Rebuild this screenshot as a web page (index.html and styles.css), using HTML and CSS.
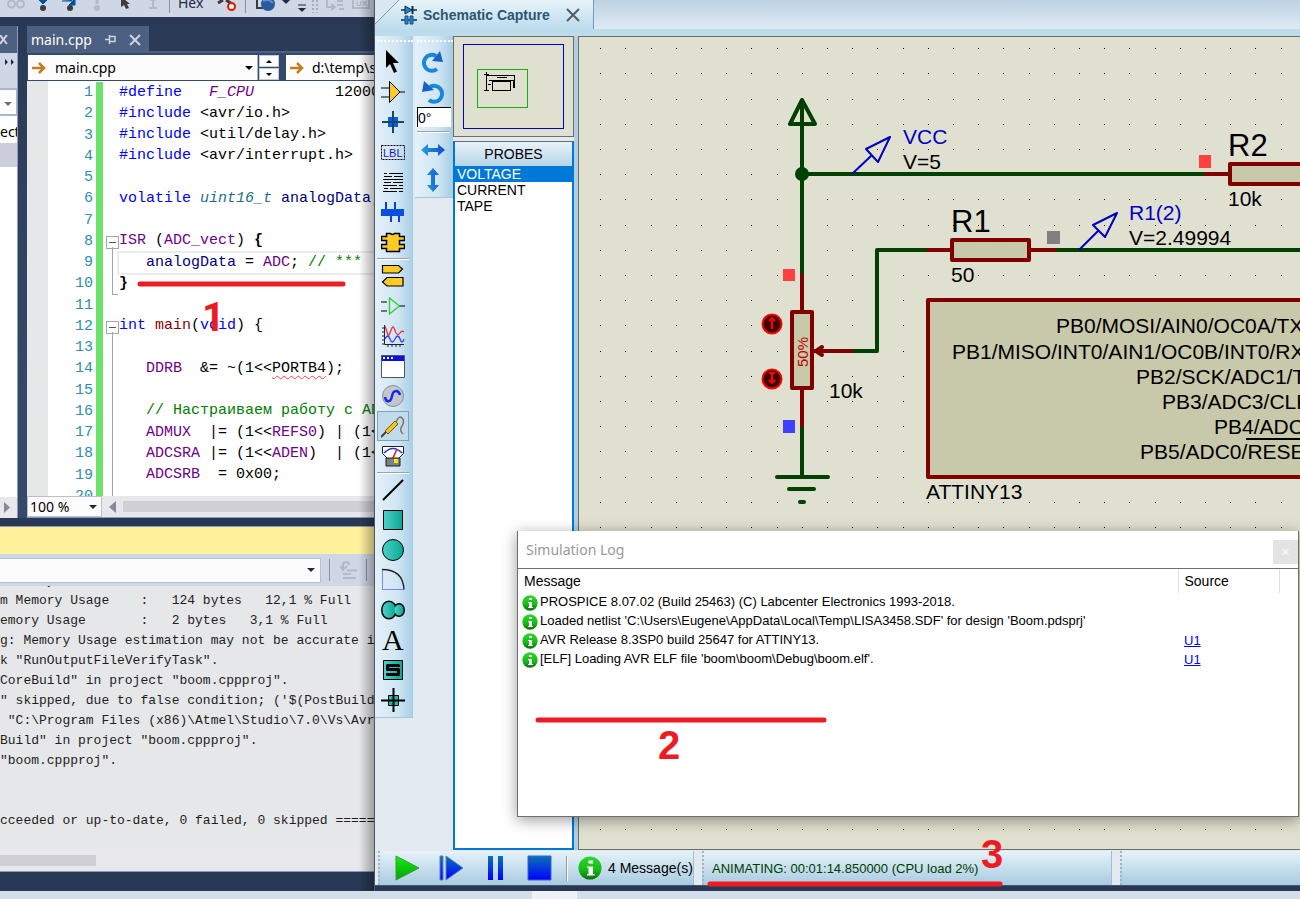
FILE: index.html
```html
<!DOCTYPE html>
<html lang="en">
<head>
<meta charset="utf-8">
<title>Schematic Capture</title>
<link rel="stylesheet" href="styles.css">
</head>
<body>
<div class="desktop">
<div class="windows">

<section class="ide" aria-label="Code editor">
  <div class="ide-toolbar">
    <svg class="ide-tools" width="375" height="17" viewBox="0 0 375 17" fill="none" aria-hidden="true">
      <g stroke="#b4b9c6" stroke-width="2"><circle cx="11.500" cy="4" r="3.500"/><circle cx="20.500" cy="4" r="3.500"/><path d="M10 0l2-2M20 0h3"/></g>
      <path d="M39 0h8l-4 4zM62 1h10V0M75 0v5h-6l5-5z" fill="#00539c" stroke="#00539c"/>
      <circle cx="43" cy="8" r="3" fill="#3b3b3b"/><circle cx="70" cy="8" r="3" fill="#3b3b3b"/>
      <path d="M97 0v4" stroke="#b4b9c6" stroke-width="3"/><circle cx="97" cy="8" r="3" fill="#b4b9c6"/>
      <path d="M121 0v7l3-2 2 4 3-1-2-4h3l-6-5z" fill="#3b3b3b"/>
      <path d="M153 0v7M149 8h8M150 0h6" stroke="#b4b9c6" stroke-width="2"/>
      <path d="M169.500 0v13M245.500 0v13" stroke="#8591a8"/>
      <path d="M218 3l5-3M226 0l6 4" stroke="#3b3b3b" stroke-width="3"/><circle cx="231.500" cy="6.500" r="3.500" fill="#fff" stroke="#e51400" stroke-width="2"/>
      <path d="M257 0v8h6" stroke="#3b3b3b" stroke-width="2"/><circle cx="268" cy="4" r="7" fill="#285a9e"/><path d="M263 1l5-2 5 4" stroke="#5f91cd" stroke-width="2"/>
      <path d="M282 0h8l-4 4z" fill="#1e2a45"/>
      <path d="M298 5h8" stroke="#1e2a45"/><path d="M298 8h8l-4 4z" fill="#1e2a45"/>
      <path d="M313 0v13M317 0v13" stroke="#7e8799" stroke-dasharray="2 2"/>
      <path d="M327 0v7h7M331 4l4 3-4 3M337 1h6M337 5h6M339 9h5" stroke="#b4b9c6" stroke-width="2"/>
      <path d="M353 0v8h16V0" stroke="#b4b9c6" stroke-width="2"/>
      <text x="356" y="6" class="tiny">UX</text>
    </svg>
    <span class="hex">Hex</span>
  </div>

  <div class="ide-main">
    <aside class="side">
      <div class="side-title"><svg width="9" height="10" viewBox="0 0 9 10" aria-hidden="true"><path d="M0 0l7 9M7 0L0 9" stroke="#ccd3e2" stroke-width="2"/></svg></div>
      <div class="side-tools"><svg width="10" height="6" viewBox="0 0 10 6" aria-hidden="true"><path d="M0 0l3 3-3 3zM6 0l3 3-3 3z" fill="#1e2a45"/></svg></div>
      <div class="side-combo"><svg width="8" height="4" viewBox="0 0 8 4" aria-hidden="true"><path d="M0 0h8L4 4z" fill="#717171"/></svg></div>
      <div class="side-text">ect</div>
      <div class="side-row"></div>
      <div class="side-body"></div>
      <div class="side-scroll"><svg width="6" height="11" viewBox="0 0 6 11" aria-hidden="true"><path d="M0 0l6 5.500L0 11z" fill="#868999"/></svg></div>
    </aside>

    <div class="editor">
      <div class="tabs">
        <div class="tab">
          <span>main.cpp</span>
          <button class="bare" aria-label="Pin"><svg width="12" height="10" viewBox="0 0 12 10" fill="none" stroke="#ccd3e2"><path d="M0 4.500h4M4.500 0v9M5 1.500h5v5H5M5 6.500h5" stroke-width="1.500"/></svg></button>
          <button class="bare" aria-label="Close"><svg width="12" height="12" viewBox="0 0 12 12"><path d="M1 1l10 10M11 1L1 11" stroke="#ccd3e2" stroke-width="2"/></svg></button>
        </div>
      </div>
      <div class="navbar">
        <div class="combo combo-file">
          <svg width="14" height="12" viewBox="0 0 14 12" fill="none" stroke="#c27d1a" stroke-width="2.500"><path d="M0 6h12M7 1l5 5-5 5"/></svg>
          <select aria-label="File"><option>main.cpp</option></select>
          <svg width="8" height="4" viewBox="0 0 8 4"><path d="M0 0h8L4 4z"/></svg>
        </div>
        <div class="spinner">
          <button aria-label="Up"><svg width="6" height="3" viewBox="0 0 6 3"><path d="M0 3h6L3 0z"/></svg></button>
          <button aria-label="Down"><svg width="6" height="3" viewBox="0 0 6 3"><path d="M0 0h6L3 3z"/></svg></button>
        </div>
        <div class="combo combo-path">
          <svg width="14" height="12" viewBox="0 0 14 12" fill="none" stroke="#c27d1a" stroke-width="2.500"><path d="M0 6h12M7 1l5 5-5 5"/></svg>
          <select aria-label="Path"><option>d:\temp\src\main.cpp</option></select>
        </div>
      </div>
      <div class="code-view">
        <div class="code">
          <div class="line"><span class="no">1</span><i class="fold"></i><code><b class="k">#define</b>   <em class="m">F_CPU</em>         12000000UL</code></div>
          <div class="line"><span class="no">2</span><i class="fold"></i><code><b class="k">#include</b> &lt;avr/io.h&gt;</code></div>
          <div class="line"><span class="no">3</span><i class="fold"></i><code><b class="k">#include</b> &lt;util/delay.h&gt;</code></div>
          <div class="line"><span class="no">4</span><i class="fold"></i><code><b class="k">#include</b> &lt;avr/interrupt.h&gt;</code></div>
          <div class="line"><span class="no">5</span><i class="fold"></i><code></code></div>
          <div class="line"><span class="no">6</span><i class="fold"></i><code><b class="k">volatile</b> <em class="t">uint16_t</em> <b class="v">analogData</b>;</code></div>
          <div class="line"><span class="no">7</span><i class="fold"></i><code></code></div>
          <div class="line"><span class="no">8</span><i class="fold open"></i><code><b class="m">ISR</b> (<b class="m">ADC_vect</b>) <strong>{</strong></code></div>
          <div class="line current"><span class="no">9</span><i class="fold bar"></i><code>   <b class="v">analogData</b> = <b class="m">ADC</b>; <b class="c">// ***</b></code></div>
          <div class="line"><span class="no">10</span><i class="fold end"></i><code><strong>}</strong></code></div>
          <div class="line"><span class="no">11</span><i class="fold"></i><code></code></div>
          <div class="line"><span class="no">12</span><i class="fold open"></i><code><b class="k">int</b> <b class="f">main</b>(<b class="k">void</b>) {</code></div>
          <div class="line"><span class="no">13</span><i class="fold bar"></i><code></code></div>
          <div class="line"><span class="no">14</span><i class="fold bar"></i><code>   <b class="m">DDRB</b>  &amp;= ~(1&lt;&lt;<b class="err">PORTB4</b>);</code></div>
          <div class="line"><span class="no">15</span><i class="fold bar"></i><code></code></div>
          <div class="line"><span class="no">16</span><i class="fold bar"></i><code>   <b class="c">// Настраиваем работу с ADC</b></code></div>
          <div class="line"><span class="no">17</span><i class="fold bar"></i><code>   <b class="m">ADMUX</b>  |= (1&lt;&lt;<b class="m">REFS0</b>) | (1&lt;&lt;</code></div>
          <div class="line"><span class="no">18</span><i class="fold bar"></i><code>   <b class="m">ADCSRA</b> |= (1&lt;&lt;<b class="m">ADEN</b>)  | (1&lt;&lt;</code></div>
          <div class="line"><span class="no">19</span><i class="fold bar"></i><code>   <b class="m">ADCSRB</b>  = 0x00;</code></div>
          <div class="line"><span class="no">20</span><i class="fold bar"></i><code></code></div>
        </div>
      </div>
      <div class="zoombar">
        <div class="combo combo-zoom">
          <select aria-label="Zoom"><option>100 %</option></select>
          <svg width="8" height="4" viewBox="0 0 8 4"><path d="M0 0h8L4 4z" fill="#1e2a45"/></svg>
        </div>
        <svg width="7" height="12" viewBox="0 0 7 12"><path d="M7 0v12L0 6z" fill="#868999"/></svg>
        <div class="thumb"></div>
      </div>
    </div>
  </div>

  <div class="output">
    <div class="output-title"></div>
    <div class="output-tools">
      <div class="combo combo-out">
        <select aria-label="Show output from"><option></option></select>
        <svg width="8" height="4" viewBox="0 0 8 4"><path d="M0 0h8L4 4z" fill="#1e2a45"/></svg>
      </div>
      <button class="bare clear" aria-label="Clear"><svg width="18" height="18" viewBox="0 0 18 18" fill="none" stroke="#b4b9c6" stroke-width="2"><path d="M3 9V4q0-3 3-3t3 3M0 5l3 4 4-4M7 9.500h10M3 13h8M3 17h13"/></svg></button>
    </div>
    <pre class="log">      y
m Memory Usage    :   124 bytes   12,1 % Full
emory Usage       :   2 bytes   3,1 % Full
g: Memory Usage estimation may not be accurate if
k "RunOutputFileVerifyTask".
CoreBuild" in project "boom.cppproj".
" skipped, due to false condition; ('$(PostBuildEv
 "C:\Program Files (x86)\Atmel\Studio\7.0\Vs\Avr.c
Build" in project "boom.cppproj".
"boom.cppproj".


cceeded or up-to-date, 0 failed, 0 skipped =======</pre>
    <div class="output-scroll"><div class="thumb"></div></div>
  </div>
  <div class="ide-shade"></div>
</section>

<main class="proteus">
  <header class="title">
    <div class="doc-tab">
      <svg class="corner" width="24" height="30" viewBox="0 0 24 30" aria-hidden="true"><path d="M0 0h24L0 24z" fill="#dce8f1"/><path d="M24 0L0 24" stroke="#6d9cbc"/></svg>
      <svg width="16" height="20" viewBox="0 0 16 20" fill="none" stroke="#12303f" aria-hidden="true"><path d="M0 5h16M0 15h16" stroke-width="1.500"/><path d="M4 1l7 4-7 4z" fill="#1c86d8"/><path d="M11.500 1v8" stroke-width="2"/><path d="M4 11h3v8H4zM9 11h3v8H9z" fill="#1c86d8" stroke="#1e4f80"/></svg>
      <h1>Schematic Capture</h1>
      <button class="bare" aria-label="Close tab"><svg width="14" height="14" viewBox="0 0 14 14"><path d="M1 1l12 12M13 1L1 13" stroke="#555c62" stroke-width="2"/></svg></button>
    </div>
  </header>

  <div class="work">
    <nav class="strip modes" aria-label="Modes">
      <button aria-label="Selection"><svg viewBox="0 0 24 24"><path d="M5 0v18l4-4 4 9 3-1.500-4-8.500h6z"/></svg></button>
      <button aria-label="Component"><svg viewBox="0 0 24 24"><path d="M0 8h9M0 17h9M19 12h5" stroke="#000"/><path d="M8.500 1.500l10.500 10.500L8.500 22.500z" fill="#ffc926" stroke="#000"/></svg></button>
      <button aria-label="Junction"><svg viewBox="0 0 24 24"><path d="M7 7h10v10H7z" fill="#0a5fd8"/><path d="M1 12h22M12 1v22" stroke="#16466e" stroke-width="2"/></svg></button>
      <button aria-label="Label"><svg viewBox="0 0 24 24"><path d="M.5 5.500h23v14H.5z" fill="none" stroke="#000" stroke-dasharray="2 1"/><text x="2" y="17" class="lbl">LBL</text></svg></button>
      <button aria-label="Text script"><svg viewBox="0 0 24 24"><path d="M3 3.500h3m2 0h14M3 6.500h8m2 0h9M2 9.500h20M3 12.500h7m2 0h10M2 15.500h14m2 0h4M3 18.500h4m2 0h13M2 21.500h14m2 0h4" stroke="#000"/></svg></button>
      <button aria-label="Bus"><svg viewBox="0 0 24 24"><path d="M0 9h23v7H0z" fill="#0a4fe0"/><path d="M5 2v7M14 2v7M10 16v6M18 16v6" stroke="#0a3fe8" stroke-width="2"/></svg></button>
      <button aria-label="Subcircuit"><svg viewBox="0 0 24 24"><path d="M5.500 3.500h4q2 2 4 0h5v3h5v4h-5v4h5v4h-5v3h-13v-3h-5v-4h5v-4h-5v-4h5z" fill="#ffc926" stroke="#000" stroke-width="1.500"/></svg></button>
      <hr>
      <button aria-label="Terminal"><svg viewBox="0 0 24 24" fill="#ffc926" stroke="#000" stroke-width="1.200"><path d="M1.500 1.500h16l4 3.500-4 4h-16zM22 13.500H6L1.500 18 6 22h16z"/></svg></button>
      <button aria-label="Pin"><svg viewBox="0 0 24 24" fill="none"><path d="M0 8h6M0 17h6M18 12h6" stroke="#000"/><path d="M8.500 4l10 8-10 8z" stroke="#2cd02c" stroke-width="1.300"/></svg></button>
      <button aria-label="Graph"><svg viewBox="0 0 24 24" fill="none"><path d="M3.500 1v19.500H23M1 4h2M1 8h2M1 12h2M1 16h2M1 20h2M7 20v3M11 20v3M15 20v3M19 20v3" stroke="#222"/><path d="M4 2l3 9h1l3-7q1-2 2 0l2 5q2 3 4 0t4-1" stroke="#f03040" stroke-width="1.300"/><path d="M4 15q3-6 5 0t5 0 5 0 4 0" stroke="#3a3aff" stroke-width="1.300"/></svg></button>
      <button aria-label="Active popup"><svg viewBox="0 0 24 24"><path d="M.5 1.500h23v22H.5z" fill="#fff" stroke="#555"/><path d="M1 2h22v5H1z" fill="#0a10e0"/><path d="M2 3h2v2H2zM6 3h2v2H6zM10 3h2v2h-2z" fill="#fff"/></svg></button>
      <button aria-label="Generator"><svg viewBox="0 0 24 24" fill="none"><circle cx="12" cy="12" r="10.500" fill="#c3c6cb" stroke="#8b8f94"/><path d="M4 13q1 5 4 4 2 0 3-5t4-5q3 0 4 4" stroke="#1428f0" stroke-width="2.500"/></svg></button>
      <button class="active" aria-label="Probe"><svg viewBox="0 0 24 24" fill="none"><path d="M0 23l5-5" stroke="#444" stroke-width="2"/><path d="M4 17L14 7l3 3L7 20z" fill="#f5c422" stroke="#6d5a10"/><path d="M15 8q3-7 6-4 3 3 0 8-3 4 1 8" stroke="#777" stroke-width="1.500"/></svg></button>
      <button aria-label="Instrument"><svg viewBox="0 0 24 24" fill="none"><path d="M1.500 2.500h21v7l-5 5h-11l-5-5z" fill="#fff" stroke="#222"/><path d="M3 9q9-9 18 0" stroke="#2438d8" stroke-width="1.500"/><path d="M12 14l4-9" stroke="#e01020" stroke-width="1.500"/><path d="M5 14h14v8H5z" fill="#7b7f86" stroke="#222"/><path d="M13 15h4v4h-4z" fill="#ffe600"/></svg></button>
      <hr>
      <button aria-label="Line"><svg viewBox="0 0 24 24"><path d="M2 22L22 2" stroke="#000" stroke-width="2"/></svg></button>
      <button aria-label="Box"><svg viewBox="0 0 24 24"><path d="M2.500 2.500h19v19h-19z" fill="url(#teal)" stroke="#000"/></svg></button>
      <button aria-label="Circle"><svg viewBox="0 0 24 24"><circle cx="12" cy="12" r="10.500" fill="url(#teal)" stroke="#000"/></svg></button>
      <button aria-label="Arc"><svg viewBox="0 0 24 24" fill="none"><path d="M1.500 1.500v20H23" stroke="#2020ff" stroke-dasharray="1 1"/><path d="M1 1.500q21 0 22 20" stroke="#222" stroke-width="1.300"/></svg></button>
      <button aria-label="Path"><svg viewBox="0 0 24 24"><g fill="#20b8a8" stroke="#000" stroke-width="2"><ellipse cx="8" cy="12" rx="7" ry="8.500"/><ellipse cx="18" cy="12" rx="5" ry="6"/></g><g fill="url(#teal)"><ellipse cx="8" cy="12" rx="6.500" ry="8"/><ellipse cx="18" cy="12" rx="4.500" ry="5.500"/></g></svg></button>
      <button aria-label="Text"><svg viewBox="0 0 24 24"><text x="1" y="22" class="letter">A</text></svg></button>
      <button aria-label="Symbol"><svg viewBox="0 0 24 24"><path d="M2.500 2.500h19v19h-19z" fill="url(#teal)" stroke="#000"/><path d="M17.500 9V7.500h-11v4h11v5h-11V15" fill="none" stroke="#000" stroke-width="3" stroke-linejoin="round"/></svg></button>
      <button aria-label="Marker"><svg viewBox="0 0 24 24"><path d="M7.500 7.500h10v10h-10z" fill="#20b8a8" stroke="#000"/><path d="M0 12.500h24M12.500 0v24" stroke="#000" stroke-width="2"/></svg></button>
    </nav>

    <nav class="strip rotate" aria-label="Rotation">
      <button aria-label="Rotate clockwise"><svg viewBox="0 0 24 24"><path d="M16 19A8 8 0 1 1 15 6" fill="none" stroke="#1b87d8" stroke-width="4"/><path d="M19 1l3 11-11-1z" fill="#1763c8"/></svg></button>
      <button aria-label="Rotate anticlockwise"><svg viewBox="0 0 24 24"><path d="M8 20A8 8 0 1 0 9 7" fill="none" stroke="#1b87d8" stroke-width="4"/><path d="M3 1L1 12l12-2z" fill="#1763c8"/></svg></button>
      <input type="text" value="0°" aria-label="Angle">
      <hr>
      <button aria-label="Mirror horizontally"><svg viewBox="0 0 24 24"><path d="M0 12l7-6v4h10V6l7 6-7 6v-4H7v4z" fill="url(#blue)"/></svg></button>
      <button aria-label="Mirror vertically"><svg viewBox="0 0 24 24"><path d="M12 0l6 7h-4v10h4l-6 7-6-7h4V7H6z" fill="url(#blue)"/></svg></button>
    </nav>

    <aside class="panels">
      <div class="overview">
        <svg width="117" height="98" viewBox="0 0 117 98" fill="none" shape-rendering="crispEdges" aria-hidden="true"><path d="M9.500 7.500h100v84h-100z" stroke="#0000d0"/><path d="M23.500 32.500h50v38h-50z" stroke="#0fb40f"/><path d="M32 35v18M30 37h5M30 53h5M33 38h27v13M35 43h24v8M34 47h3M38.500 44.500h18v9h-18zM43 40h10" stroke="#000"/></svg>
      </div>
      <div class="picker">
        <h2>PROBES</h2>
        <ul role="listbox" aria-label="Probes">
          <li role="option" class="chosen" aria-selected="true">VOLTAGE</li>
          <li role="option">CURRENT</li>
          <li role="option">TAPE</li>
        </ul>
      </div>
    </aside>

    <div class="canvas">
      <svg class="sheet" aria-label="Schematic">
        <defs>
          <linearGradient id="teal"><stop offset="0" stop-color="#4fd0cc"/><stop offset="1" stop-color="#08a890"/></linearGradient>
          <linearGradient id="blue" gradientUnits="userSpaceOnUse" x1="0" y1="12" x2="24" y2="8"><stop offset="0" stop-color="#22a4e0"/><stop offset="1" stop-color="#1248d0"/></linearGradient>
          <linearGradient id="play" x2="0" y2="1"><stop offset="0" stop-color="#10f010"/><stop offset="1" stop-color="#06a006"/></linearGradient>
          <linearGradient id="deep" x2="0" y2="1"><stop offset="0" stop-color="#0a72b8"/><stop offset="1" stop-color="#0000ff"/></linearGradient>
          <linearGradient id="info" x2="0" y2="1"><stop offset="0" stop-color="#30d830"/><stop offset=".6" stop-color="#18b818"/><stop offset="1" stop-color="#087008"/></linearGradient>
          <pattern id="grid" patternUnits="userSpaceOnUse" x="121" y="99" width="126" height="126">
            <path d="M0 .5h126M0 25.500h126M0 50.500h126M0 75.500h126M0 100.500h126" stroke="#000" stroke-dasharray="1 25 1 24 1 24 1 24 1 24"/>
          </pattern>
        </defs>
        <g transform="translate(-579 -37)" fill="none" stroke-linejoin="round">
          <rect x="579" y="37" width="3000" height="2000" fill="url(#grid)"/>
          <g stroke="#004000" stroke-width="4" stroke-linecap="round">
            <path d="M802 100v175M802 427v50M802 174h402M802 100l-12 24h25zM841 351h36V250h50M1056 250h300"/>
            <path d="M777 477h51M789 489h25M800 502h4"/>
          </g>
          <circle cx="802" cy="174" r="7" fill="#004000"/>
          <g stroke="#800000" stroke-width="4">
            <path d="M802 274v38M802 389v38M814 351h39M927 250h24M1031 250h25M1204 174h24"/>
            <path d="M822 347l-6 4 6 4" stroke-linecap="round"/>
            <path d="M792 312h20v76h-20zM952 240h77v20h-77zM1230 164h77v20h-77zM928 300h500v177H928z" fill="#c8c8aa"/>
          </g>
          <g stroke="#0000c0" stroke-width="2"><path d="M852 174l19-18M890 137l-24 12 12 13z"/><path d="M1079 250l19-19M1117 213l-24 12 12 12z"/></g>
          <path d="M783 269h12v12h-12zM1199 155h12v13h-12z" fill="#ff4040"/>
          <path d="M783 420h12v13h-12z" fill="#4040ff"/>
          <path d="M1047 231h13v13h-13z" fill="#808080"/>
          <g fill="#400000" stroke="#ff0000" stroke-width="2"><circle cx="772" cy="324" r="9.500"/><circle cx="772" cy="379" r="9.500"/></g>
          <path d="M772 329v-10M769 321l3-3 3 3M772 373v10M769 380l3 3 3-3M769 373h6" stroke="#ff0000" stroke-width="2"/>
          <g class="part-text">
            <text x="903" y="144" class="blue">VCC</text><text x="903" y="169">V=5</text>
            <text x="1129" y="220" class="blue">R1(2)</text><text x="1129" y="245">V=2.49994</text>
            <text x="951" y="232" class="ref">R1</text><text x="951" y="282">50</text>
            <text x="1228" y="156" class="ref">R2</text><text x="1228" y="206">10k</text>
            <text x="829" y="398">10k</text>
            <text x="926" y="499">ATTINY13</text>
            <text x="1056" y="333">PB0/MOSI/AIN0/OC0A/TXD</text>
            <text x="952" y="359">PB1/MISO/INT0/AIN1/OC0B/INT0/RXD</text>
            <text x="1136" y="384">PB2/SCK/ADC1/T0</text>
            <text x="1162" y="409">PB3/ADC3/CLKI</text>
            <text x="1214" y="434">PB4/ADC2</text>
            <text x="1140" y="459">PB5/ADC0/RESET</text>
            <text x="787" y="358" class="wiper" transform="rotate(-90 802 352)">50%</text>
          </g>
          <path d="M1246 439h80" stroke="#000" stroke-width="2"/>
        </g>
      </svg>
    </div>
  </div>

  <footer class="status">
    <div class="controls">
      <button aria-label="Play"><svg width="26" height="26" viewBox="0 0 26 26"><path d="M2 1l23 12L2 25z" fill="url(#play)" stroke="#3a9a3a"/></svg></button>
      <button aria-label="Step"><svg width="26" height="26" viewBox="0 0 26 26"><path d="M2 1h3v24H2zM8 1l17 12L8 25z" fill="url(#deep)" stroke="#5a80b8"/></svg></button>
      <button aria-label="Pause"><svg width="26" height="26" viewBox="0 0 26 26"><path d="M6 1h5v24H6zM16 1h5v24h-5z" fill="url(#deep)"/></svg></button>
      <button aria-label="Stop"><svg width="26" height="26" viewBox="0 0 26 26"><path d="M2 1h23v24H2z" fill="url(#deep)" stroke="#3a66c8"/></svg></button>
      <i class="rule"></i>
      <svg class="info" width="24" height="24" viewBox="0 0 16 16" aria-hidden="true"><circle cx="8" cy="8" r="7.700" fill="url(#info)"/><path d="M7 3h3v2H7zM6 7h4v5h1v1H6v-1h1V8H6z" fill="#fff"/></svg>
      <span>4 Message(s)</span>
    </div>
    <div class="anim">ANIMATING: 00:01:14.850000 (CPU load 2%)</div>
    <div class="rest"></div>
  </footer>

  <section class="simlog" aria-label="Simulation Log">
    <header><h2>Simulation Log</h2><button aria-label="Close log">×</button></header>
    <table>
      <thead><tr><th>Message</th><th>Source</th><th></th></tr></thead>
      <tbody>
        <tr><td><svg viewBox="0 0 16 16"><circle cx="8" cy="8" r="7.700" fill="url(#info)"/><path d="M7 3h3v2H7zM6 7h4v5h1v1H6v-1h1V8H6z" fill="#fff"/></svg>PROSPICE 8.07.02 (Build 25463) (C) Labcenter Electronics 1993-2018.</td><td></td><td></td></tr>
        <tr><td><svg viewBox="0 0 16 16"><circle cx="8" cy="8" r="7.700" fill="url(#info)"/><path d="M7 3h3v2H7zM6 7h4v5h1v1H6v-1h1V8H6z" fill="#fff"/></svg>Loaded netlist 'C:\Users\Eugene\AppData\Local\Temp\LISA3458.SDF' for design 'Boom.pdsprj'</td><td></td><td></td></tr>
        <tr><td><svg viewBox="0 0 16 16"><circle cx="8" cy="8" r="7.700" fill="url(#info)"/><path d="M7 3h3v2H7zM6 7h4v5h1v1H6v-1h1V8H6z" fill="#fff"/></svg>AVR Release 8.3SP0 build 25647 for ATTINY13.</td><td><a href="#u1">U1</a></td><td></td></tr>
        <tr><td><svg viewBox="0 0 16 16"><circle cx="8" cy="8" r="7.700" fill="url(#info)"/><path d="M7 3h3v2H7zM6 7h4v5h1v1H6v-1h1V8H6z" fill="#fff"/></svg>[ELF] Loading AVR ELF file 'boom\boom\Debug\boom.elf'.</td><td><a href="#u1">U1</a></td><td></td></tr>
      </tbody>
    </table>
  </section>
</main>
</div>

<div class="taskbar"><i></i></div>

<svg class="marks" aria-hidden="true">
  <path d="M140 284h203M538 720h286M710 884h290" stroke="#ed1c24" stroke-width="5" stroke-linecap="round"/>
  <text x="202" y="331" class="one">1</text><text x="658" y="759">2</text><text x="981" y="868">3</text>
</svg>
</div>
</body>
</html>
```
FILE: styles.css
```css
* { box-sizing: border-box; }
body { margin: 0; font-family: "Liberation Sans", Arial, sans-serif; font-size: 14px; color: #000; }
button, select, input { font: inherit; color: inherit; margin: 0; padding: 0; border: 0; border-radius: 0; background: none; }
svg { display: block; flex: none; }
h1, h2, ul, pre { margin: 0; padding: 0; font-weight: normal; }

.desktop { position: relative; display: flex; flex-direction: column; height: 100vh; overflow: hidden; background: #293955; }
.windows { flex: 1; display: flex; min-height: 0; }
.bare { display: flex; }

/* Code editor */
.ide { position: relative; flex: 0 0 375px; display: flex; flex-direction: column; overflow: hidden; padding-bottom: 19px; background: #293955; font-family: "Noto Sans", sans-serif; }
.ide-toolbar { position: relative; height: 17px; flex: none; overflow: hidden; background: #cfd6e5; }
.hex { position: absolute; left: 178px; top: -7px; line-height: 20px; font-size: 14px; color: #1e2a45; }
.tiny { font: 8px "Liberation Sans", sans-serif; fill: #a0a6b5; }
.ide-main { flex: none; display: flex; gap: 9px; padding-top: 9px; background: linear-gradient(#293955, #35496a 80%); }
.ide-shade { position: absolute; top: 0; right: 0; bottom: 0; width: 16px; background: linear-gradient(to right, transparent, rgba(0, 0, 0, .3)); border-right: 1px solid #4c5667; }

.side { width: 18px; flex: none; display: flex; flex-direction: column; border-right: 1px solid #8e9bbc; background: #fff; overflow: hidden; }
.side-title { height: 27px; padding: 9px 0 0; background: #4d6082; }
.side-tools { height: 35px; padding: 6px 5px; background: #cfd6e5; }
.side-combo { height: 28px; padding: 12px 4px; background: #fcfcfc; border: solid #a9b5ce; border-width: 2px 1px 2px 0; }
.side-text { height: 27px; line-height: 32px; font-size: 14px; }
.side-row { height: 24px; background: #cccedb; }
.side-body { flex: 1; }
.side-scroll { height: 21px; padding: 5px 4px; background: #e8e8ec; }

.editor { flex: 1; min-width: 0; display: flex; flex-direction: column; }
.tabs { border-bottom: 2px solid #4d6082; display: flex; }
.tab { display: flex; align-items: center; height: 25px; padding: 2px 8px 0 4px; background: #4d6082; color: #fff; }
.tab span { width: 74px; }
.tab button + button { margin-left: 12px; }
.navbar { display: flex; height: 28px; padding: 2px 0 1px 1px; background: #35496a; }
.combo { display: flex; align-items: center; background: #fcfcfc; }
.combo select { appearance: none; flex: 1; min-width: 0; height: 100%; }
.combo-file { width: 230px; gap: 9px; padding: 0 4px; border-right: 1px solid #a9b5ce; }
.combo-path { flex: 1; min-width: 0; gap: 8px; margin-left: 7px; padding-left: 4px; }
.spinner { display: flex; flex-direction: column; gap: 1px; width: 20px; margin-left: 1px; }
.spinner button { flex: 1; display: flex; align-items: center; justify-content: center; background: #fcfcfc; border: 1px solid #c4cbdb; }

.code-view { height: 415px; overflow: hidden; padding-top: 1px; background: linear-gradient(to right, #e6e7e8 21px, #fff 21px); }
.code { display: grid; grid-auto-rows: 1fr; height: 425px; font-family: "Liberation Mono", monospace; font-size: 15px; }
.line { display: flex; align-items: center; min-height: 0; }
.line .no { align-self: stretch; width: 76px; flex: none; padding-right: 3px; text-align: right; line-height: 22px; color: #2b91af; border-right: 7px solid #6ce26c; }
.line code { font: inherit; white-space: pre; line-height: 20px; }
.line b, .line em { font-weight: normal; }
.fold { position: relative; align-self: stretch; width: 16px; flex: none; }
.fold.open::before { content: ""; position: absolute; left: 3px; top: 5px; width: 11px; height: 11px; border: 1px solid #a5a5a5; background: linear-gradient(#555, #555) center / 7px 1px no-repeat; }
.fold.open::after { content: ""; position: absolute; left: 9px; top: 16px; bottom: 0; border-left: 1px solid #a5a5a5; }
.fold.bar::after, .fold.end::after { content: ""; position: absolute; left: 9px; top: 0; bottom: 0; border-left: 1px solid #a5a5a5; }
.fold.end::after { bottom: 0; width: 5px; border-bottom: 1px solid #a5a5a5; }
.current code { flex: 1; box-shadow: 0 0 0 2px #ececf0; }
.k { color: #0000ff; }
.m { color: #6f008a; }
.t { color: #216f85; }
.v { color: #000080; }
.c { color: #008000; }
.f { color: #880000; }
.err { text-decoration: underline wavy #ff4040 1px; text-underline-offset: 3px; }
.zoombar { display: flex; align-items: center; height: 22px; background: #e8e8ec; border-bottom: 1px solid #8e9bbc; }
.combo-zoom { width: 75px; height: 21px; margin-right: 7px; padding: 0 4px 0 2px; border: 1px solid #b6bfd3; }
.zoombar .thumb { flex: 1; height: 11px; margin-left: 7px; background: #cfd0d6; }

.output { flex: 1; min-height: 0; display: flex; flex-direction: column; border-top: 1px solid #8e9bbc; border-bottom: 1px solid #8e9bbc; margin-top: 8px; background: #e6e7e8; }
.output-title { height: 27px; flex: none; background: #fff29d; }
.output-tools { display: flex; align-items: center; height: 32px; flex: none; background: #cfd6e5; }
.combo-out { width: 321px; height: 25px; padding-right: 5px; border: 1px solid #b6bfd3; border-left: 0; }
.clear { height: 22px; margin-left: 8px; padding: 2px 8px 0 10px; border: solid #8591a8; border-width: 0 1px; }
.log { flex: 1; min-height: 0; overflow: hidden; font-family: "Liberation Mono", monospace; font-size: 13px; line-height: 20px; color: #1e1e1e; margin-top: -15px; clip-path: inset(15px 0 0); }
.output-scroll { height: 21px; flex: none; padding: 5px 0; background: #e8e8ec; }
.output-scroll .thumb { width: 96px; height: 11px; background: #cfd0d6; }

/* Schematic window */
.proteus { position: relative; flex: 1; min-width: 0; display: flex; flex-direction: column; margin-bottom: 5px; background: #e2e9ef; }
.title { height: 36px; flex: none; border-bottom: 7px solid #bcdcec; background: linear-gradient(#bdd2e2, #dfeaf2); }
.doc-tab { position: relative; display: flex; align-items: center; height: 29px; width: 219px; padding: 0 13px 0 26px; gap: 6px; border-right: 1px solid #6d9cbc; background: linear-gradient(#e8f3fa, #bcdcec); }
.corner { position: absolute; left: 0; top: 0; }
.title h1 { flex: 1; font-size: 14px; font-weight: bold; white-space: nowrap; color: #2d5573; }
.work { flex: 1; min-height: 0; display: flex; align-items: stretch; }
.strip { position: relative; align-self: flex-start; display: flex; flex-direction: column; align-items: flex-start; width: 38px; padding: 11px 4px 2px 2px; background: linear-gradient(to right, #e4f1fa, #d0e5f3 60%, #a6cde6); border-bottom: 1px solid #a5c6dc; }
.strip::before { content: ""; position: absolute; left: 2px; right: 0; top: 4px; border-top: 2px dotted #fff; }
.strip button { height: 30px; width: 32px; display: flex; align-items: center; justify-content: center; }
.strip button svg { width: 24px; height: 24px; }
.strip .active { background: #c1dbea; border: 1px solid #76a5c1; }
.strip hr { width: 32px; height: 2px; margin: 1px 0; border: 0; background: #a0a0a0; border-bottom: 1px solid #fff; }
.lbl { font: 11px "Liberation Sans", sans-serif; fill: #1414d8; }
.letter { font: 30px "Liberation Serif", serif; }
.rotate { margin-left: 2px; }
.rotate input { width: 34px; height: 20px; background: #fff; border: solid #000; border-width: 1px 0 0 1px; }
.rotate hr { margin: 4px 0 2px; }
.panels { flex: none; width: 121px; display: flex; flex-direction: column; gap: 4px; }
.overview { height: 101px; border: 1px solid #6b6b68; background: #e0e0d0; }
.picker { flex: 1; border: 2px solid #0078d7; border-top: 1px solid #6b6b68; background: #fff; }
.picker h2 { height: 24px; line-height: 24px; text-align: center; font-size: 14px; background: linear-gradient(#e8f3fa, #b5d5e8); }
.picker ul { list-style: none; }
.picker li { height: 16px; line-height: 16px; padding-left: 2px; }
.picker .chosen { background: #0078d7; color: #fff; }
.canvas { flex: 1; min-width: 0; margin-left: 4px; border: solid #6b6b68; border-width: 1px 0 1px 1px; background: #e0e0d0; box-shadow: -4px 0 #b0cfe0; position: relative; }
.sheet { position: absolute; width: 100%; height: 100%; overflow: hidden; }
.part-text { font-size: 21px; fill: #000; }
.ref { font-size: 31px; }
.blue { fill: #0000c0; }
.wiper { font-size: 15px; fill: #c00000; }

.status { display: flex; height: 36px; flex: none; gap: 8px; padding: 1px 0 0 3px; border-bottom: 1px solid #45566a; }
.status > div { display: flex; align-items: center; background: linear-gradient(#e6f2f9, #a8cbe1); border-left: 2px dotted #9db6c7; border-right: 1px solid #9cc0d6; white-space: nowrap; }
.controls { width: 316px; padding-left: 14px; gap: 18px; }
.rule { width: 2px; height: 25px; background: #8f9ba3; border-right: 1px solid #fff; margin: 0 -8px 0 -4px; }
.controls .info { margin-right: -12px; }
.anim { width: 410px; padding-left: 8px; color: #003c00; font-size: 13px; }
.status .rest { flex: 1; border-right: 0; }

.simlog { position: absolute; left: 142px; right: 1px; bottom: 69px; height: 286px; display: flex; flex-direction: column; background: #fff; border: 1px solid #6f6f6f; border-top: 0; box-shadow: 0 3px 14px rgba(0, 0, 0, .4); }
.simlog header { display: flex; align-items: center; justify-content: space-between; height: 38px; padding-left: 8px; border-bottom: 1px solid #6f6f6f; }
.simlog h2 { font-family: "Noto Sans", sans-serif; font-size: 14px; color: #999; }
.simlog header button { width: 25px; height: 24px; margin-top: 4px; background: #e3e3e3; color: #fff; }
.simlog table { border-collapse: collapse; table-layout: fixed; width: 100%; font-size: 13px; }
.simlog th { height: 24px; padding: 0 6px; text-align: left; font-weight: normal; border-right: 1px solid #e0e0e0; font-size: 14px; }
.simlog th:nth-child(2) { width: 101px; }
.simlog th:nth-child(3) { width: 19px; border: 0; }
.simlog td { height: 19px; padding: 0 4px; white-space: nowrap; line-height: 16px; }
.simlog td svg { display: inline-block; width: 16px; height: 16px; margin-right: 2px; vertical-align: middle; }
.simlog td + td { padding-left: 6px; }
.simlog a { color: #0000ff; }

.taskbar { height: 8px; flex: none; background: #d2dfe9; }
.taskbar i { display: block; width: 45px; height: 100%; margin-left: 532px; background: #ecf2f8; }
.marks { position: absolute; inset: 0; width: 100%; height: 100%; pointer-events: none; }
.marks text { font-size: 40px; font-weight: bold; fill: #ed1c24; }
.marks .one { font-family: Roboto, sans-serif; }
```
